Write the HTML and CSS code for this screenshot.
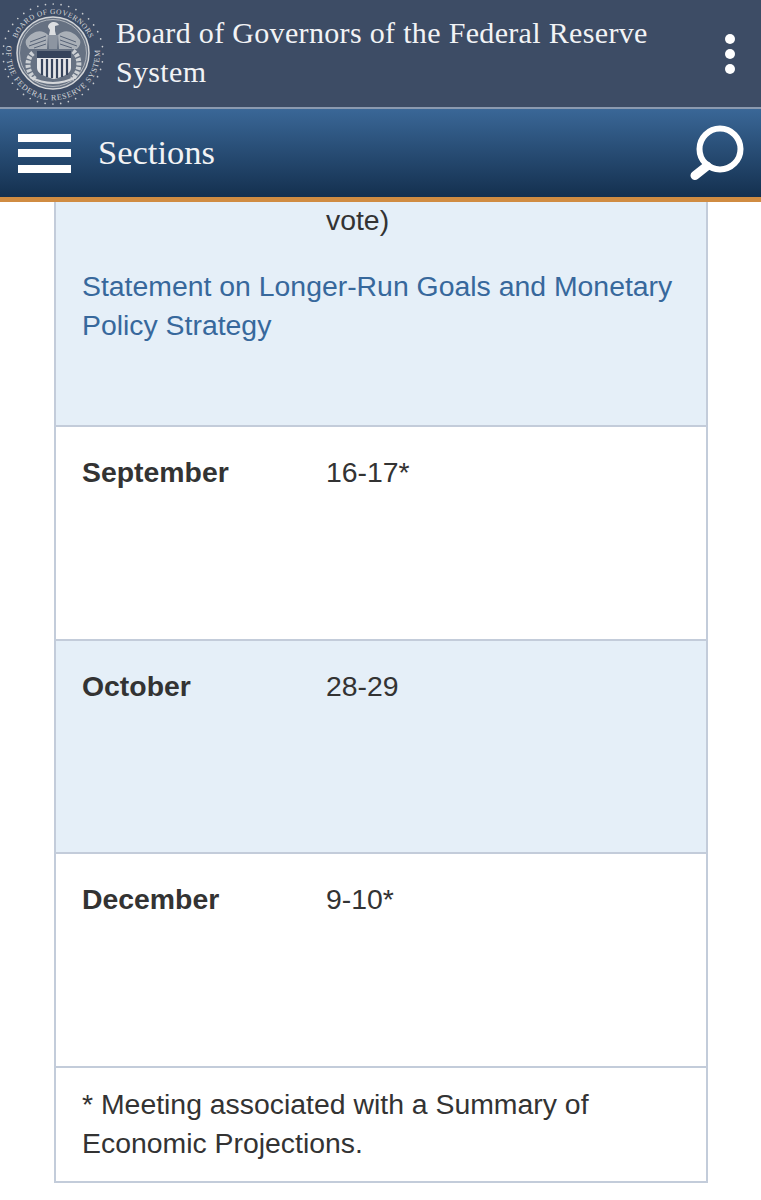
FILE: index.html
```html
<!DOCTYPE html>
<html lang="en">
<head>
    <meta charset="UTF-8">
    <title>Federal Open Market Committee</title>
    <link rel="stylesheet" href="styles.css">
</head>
<body>
    <header class="top-bar">
        <svg class="seal" viewBox="0 0 106 106" width="106" height="106">
            <defs>
                <path id="ring-top" d="M16.8 37.4 A39 39 0 0 1 89.2 37.4"/>
                <path id="ring-bottom" d="M6.6 44.6 A47 47 0 1 0 99.7 47.1"/>
            </defs>
            <circle cx="53" cy="53" r="50" fill="none" stroke="#c9ccd0" stroke-width="1.7" stroke-linecap="round" stroke-dasharray="0 7.85"/>
            <text class="seal-text seal-top"><textPath href="#ring-top">BOARD OF GOVERNORS</textPath></text>
            <text class="seal-text seal-bottom"><textPath href="#ring-bottom">OF THE FEDERAL RESERVE SYSTEM</textPath></text>
            <circle cx="53" cy="52" r="36" fill="#667182" stroke="#d5d7da" stroke-width="1.5"/>
            <circle cx="53" cy="52" r="33.5" fill="none" stroke="#c3c7cc" stroke-width="0.8"/>
            <!-- eagle -->
            <path d="M48 34 C42 28 33 29 26 39 C25 42 26 45 29 48 L47 48z M58 34 C64 28 73 29 80 39 C81 42 80 45 77 48 L59 48z" fill="#aab0b8"/>
            <path d="M46 35 L30 41 M46 39 L29 45 M46 43 L34 47 M60 35 L76 41 M60 39 L77 45 M60 43 L72 47" stroke="#566276" stroke-width="1"/>
            <path d="M48 34 L58 34 L57 48 H49z" fill="#8d95a1"/>
            <path d="M48 26 C48 23 51 21 54 21 C56 21 58 22 59 24 L55 25 L55 30 L56 34 H49 L50 29z" fill="#dcdee1"/>
            <!-- shield -->
            <path d="M37 50 H71 V67 C71 73 62 76 54 78 C46 76 37 73 37 67z" fill="#e6e7e9"/>
            <path d="M37 50 H71 V57 H37z" fill="#36445c"/>
            <path d="M42 58 V74 M47 58 V76 M52 58 V77 M57 58 V77 M62 58 V76 M67 58 V74" stroke="#36445c" stroke-width="2.2"/>
            <!-- branches and ribbon -->
            <path d="M33 52 C26 58 26 70 35 78 M73 50 C81 56 81 70 72 78" fill="none" stroke="#ccd0d4" stroke-width="5" stroke-dasharray="3 1.4"/>
            <path d="M30 76 Q53 88 76 76" fill="none" stroke="#d5d7da" stroke-width="2"/>
        </svg>
        <div class="site-title">Board of Governors of the Federal Reserve System</div>
        <div class="dots"><span></span><span></span><span></span></div>
    </header>

    <nav class="nav-bar">
        <div class="burger"><span></span><span></span><span></span></div>
        <div class="nav-label">Sections</div>
        <svg class="search" viewBox="0 0 56 56" width="56" height="56">
            <circle cx="32" cy="24" r="20.5" fill="none" stroke="#fff" stroke-width="6"/>
            <path d="M19 41 L7 50.5" stroke="#fff" stroke-width="9" stroke-linecap="round"/>
        </svg>
    </nav>

    <main class="calendar">
        <div class="row row-first shaded">
            <div class="month"></div>
            <div class="dates">vote)</div>
            <a class="link" href="#">Statement on Longer-Run Goals and Monetary Policy Strategy</a>
        </div>
        <div class="row">
            <div class="month">September</div>
            <div class="dates">16-17*</div>
        </div>
        <div class="row shaded">
            <div class="month">October</div>
            <div class="dates">28-29</div>
        </div>
        <div class="row">
            <div class="month">December</div>
            <div class="dates">9-10*</div>
        </div>
        <div class="note">* Meeting associated with a Summary of Economic Projections.</div>
    </main>
</body>
</html>
```

FILE: styles.css
```css
body {
    margin: 0;
    font-family: "Liberation Sans", Arial, sans-serif;
    font-size: 28.4px;
    line-height: 39px;
    color: #333;
    background-color: #fff;
}

.top-bar {
    height: 107px;
    background-color: #3d4c65;
    border-bottom: 2px solid #8b9ab0;
    display: flex;
    align-items: center;
}

.seal {
    flex: none;
    margin-right: 10px;
}

.seal-text {
    font-family: "Liberation Serif", serif;
    fill: #d5d7da;
}

.seal-top {
    font-size: 7.5px;
    letter-spacing: 0.4px;
}

.seal-bottom {
    font-size: 8px;
    letter-spacing: 0.8px;
}

.site-title {
    width: 570px;
    margin-bottom: 4px;
    font-family: "Liberation Serif", serif;
    font-size: 30px;
    line-height: 39px;
    letter-spacing: 0.33px;
    color: #f2f3f5;
}

.dots {
    margin-left: auto;
    margin-right: 26px;
    display: flex;
    flex-direction: column;
    gap: 5px;
}

.dots span {
    width: 10px;
    height: 10px;
    border-radius: 50%;
    background-color: #fff;
}

.nav-bar {
    height: 88px;
    background: linear-gradient(#3a6797, #14304f);
    display: flex;
    align-items: center;
    padding-left: 18px;
    padding-right: 17px;
}

.burger {
    width: 53px;
    display: flex;
    flex-direction: column;
    gap: 7.5px;
    margin-right: 27px;
}

.burger span {
    height: 8px;
    background-color: #fff;
}

.nav-label {
    margin-bottom: 2px;
    font-family: "Liberation Serif", serif;
    font-size: 34.5px;
    color: #f2f3f5;
}

.search {
    margin-left: auto;
}

.calendar {
    border-top: 5px solid #d08c42;
    padding: 0 53px 0 54px;
}

.row {
    height: 213.5px;
    box-sizing: border-box;
    border: solid #c3ccda;
    border-width: 0 2px 2px;
    padding: 26px 26px 0;
    display: grid;
    grid-template-columns: 244px 1fr;
    align-content: start;
}

.row-first {
    height: 225px;
    padding-top: 0;
}

.row-first .dates {
    margin-top: -1px;
}

.shaded {
    background-color: #e5eff8;
}

.month {
    font-weight: bold;
}

.link {
    grid-column: 1 / 3;
    margin-top: 27px;
    color: #37689c;
    text-decoration: none;
}

.note {
    height: 115.5px;
    box-sizing: border-box;
    border: solid #c3ccda;
    border-width: 0 2px 2px;
    padding: 17px 26px 0;
}
```
